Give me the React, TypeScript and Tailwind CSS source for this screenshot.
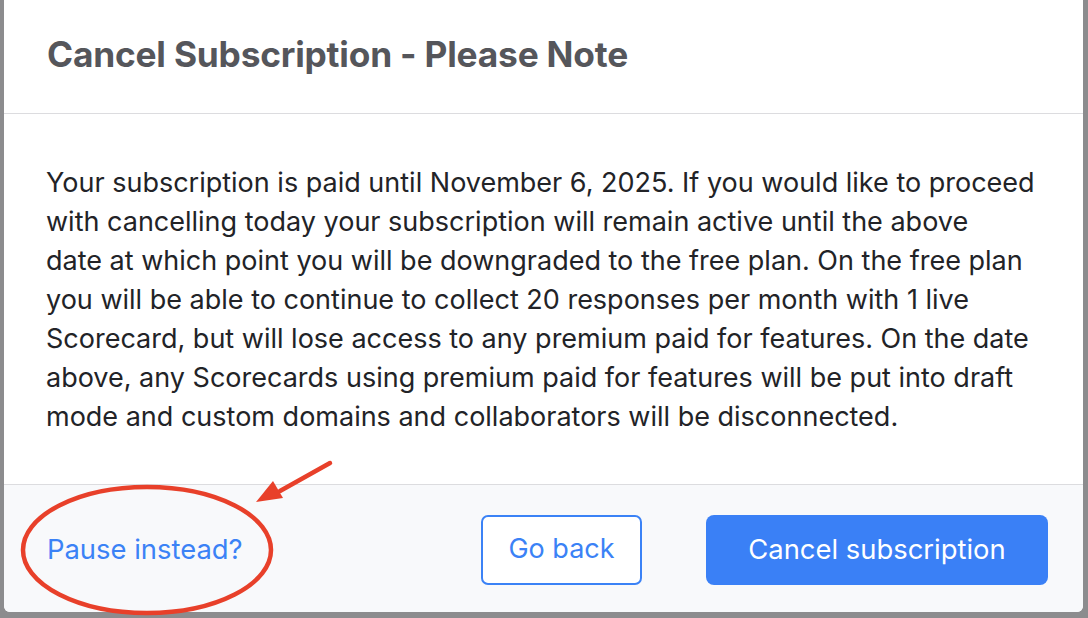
import React from 'react';

// Line breaks follow the original dialog's wrapping
const bodyLines = [
  'Your subscription is paid until November 6, 2025. If you would like to proceed',
  'with cancelling today your subscription will remain active until the above',
  'date at which point you will be downgraded to the free plan. On the free plan',
  'you will be able to continue to collect 20 responses per month with 1 live',
  'Scorecard, but will lose access to any premium paid for features. On the date',
  'above, any Scorecards using premium paid for features will be put into draft',
  'mode and custom domains and collaborators will be disconnected.',
];

const App: React.FC = () => {
  return (
    <div
      className="relative w-[1088px] h-[618px] overflow-hidden bg-[#8c8c8e] pl-[4px] pr-[5px] pb-[6px]"
      style={{ fontFamily: 'Inter, "Open Sans", sans-serif' }}
    >
      <div className="flex h-full flex-col overflow-hidden rounded-b-[6px] bg-white">
        {/* header */}
        <div className="flex h-[114px] items-center border-b border-[#dcdcdf] px-[43px] pb-[2px]">
          <h1 className="text-[35.3px] font-bold tracking-[-0.2px] text-[#55565b]">
            Cancel Subscription - Please Note
          </h1>
        </div>

        {/* body */}
        <div className="flex-1 pl-[42px] pr-[20px] pt-[49px]">
          <p className="text-[27px] leading-[39px] text-[#222327] whitespace-nowrap">
            {bodyLines.map((line, i) => (
              <React.Fragment key={i}>
                {line}
                {i < bodyLines.length - 1 && <br />}
              </React.Fragment>
            ))}
          </p>
        </div>

        {/* footer */}
        <div className="flex h-[128px] items-center justify-between border-t border-[#dcdcdf] bg-[#f8f9fb] pl-[43px] pr-[35px] pt-[2px]">
          <button className="text-[27.4px] text-[#3b82f6]">Pause instead?</button>
          <div className="flex gap-[64px]">
            <button className="h-[70px] w-[161px] rounded-[7px] border-2 border-[#3b82f6] bg-white text-[27px] text-[#3b82f6]">
              Go back
            </button>
            <button className="h-[70px] w-[342px] rounded-[8px] bg-[#3a80f6] text-[27.4px] text-white">
              Cancel subscription
            </button>
          </div>
        </div>
      </div>

      {/* annotation overlay */}
      <svg
        className="pointer-events-none absolute left-0 top-0"
        width={1088}
        height={618}
        viewBox="0 0 1088 618"
      >
        <ellipse cx={147} cy={550} rx={124} ry={63} fill="none" stroke="#e8402a" strokeWidth={4.5} />
        <line x1={330} y1={463} x2={280} y2={491} stroke="#e8402a" strokeWidth={4.5} strokeLinecap="round" />
        <polygon points="256,502 273,481 283,498" fill="#e8402a" />
      </svg>
    </div>
  );
};

export default App;
